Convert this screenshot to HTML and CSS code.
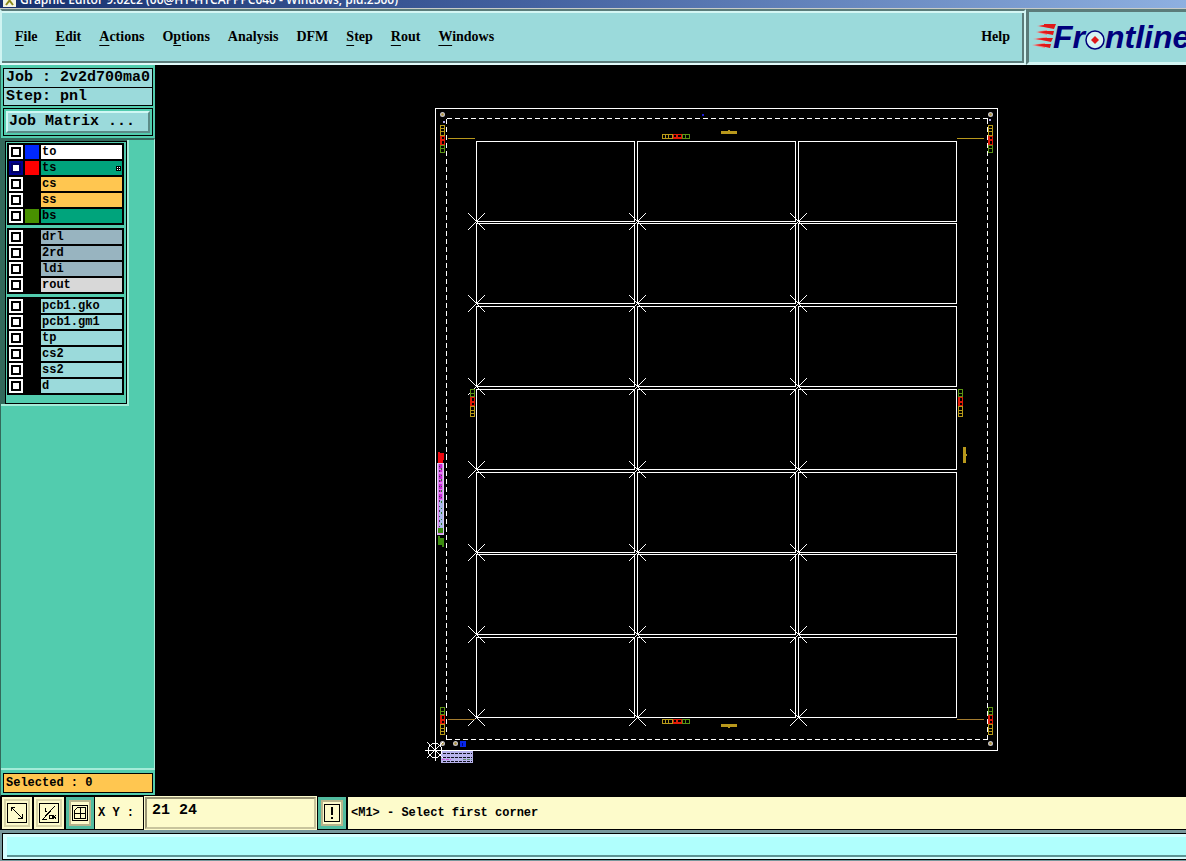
FILE: index.html
```html
<!DOCTYPE html>
<html lang="en">
<head>
<meta charset="UTF-8">
<meta name="viewport" content="width=device-width, initial-scale=1.0">
<title>Graphic Editor</title>
<link rel="stylesheet" href="styles.css">
</head>
<body>

<div class="titlebar">
  <svg class="title-icon" width="13" height="13" viewBox="0 0 13 13">
    <rect width="13" height="13" fill="#f4f4e4"/>
    <path d="M3 2L10 11M10 2L3 11" stroke="#8c8a1c" stroke-width="2"/>
  </svg>
  <span>Graphic Editor 9.02c2 (00@HY-HTCAPPPC040 - Windows, pid:2500)</span>
</div>

<div class="top">
  <nav class="menubar">
    <button class="menu"><u>F</u>ile</button>
    <button class="menu"><u>E</u>dit</button>
    <button class="menu"><u>A</u>ctions</button>
    <button class="menu">O<u>p</u>tions</button>
    <button class="menu">Analysis</button>
    <button class="menu">DFM</button>
    <button class="menu"><u>S</u>tep</button>
    <button class="menu"><u>R</u>out</button>
    <button class="menu"><u>W</u>indows</button>
    <button class="menu help">Help</button>
  </nav>
  <div class="logo">
    <svg width="158" height="50" role="img" aria-label="Frontline">
      <g fill="#f08080">
        <path d="M8 14L20 12L20 16Z"/>
        <path d="M7 20L18 18L18 23Z"/>
        <path d="M4 27L18 25L18 29Z"/>
        <path d="M3 33L16 31L16 36Z"/>
      </g>
      <g fill="#e01818">
        <path d="M10 14L15 13V12H27L25 17L15 15Z"/>
        <path d="M9 20L16 19H25L24 23L14 21Z"/>
        <path d="M7 27L14 26H24L22 30L13 28Z"/>
        <path d="M6 33L13 32H22L21 36L12 34Z"/>
      </g>
      <g class="logo-text">
        <text x="24" y="36">Fr</text>
        <text x="76" y="36">ntline</text>
      </g>
      <circle cx="66" cy="28" r="9" fill="#d5f3f3" stroke="#00007c" stroke-width="1.5"/>
      <path d="M66 24L70 28L66 32L62 28Z" fill="#e01818"/>
    </svg>
  </div>
</div>

<div class="main">
  <aside class="sidebar">
    <div class="info">
      <div>Job : 2v2d700ma0</div>
      <div>Step: pnl</div>
    </div>
    <div class="matrix">
      <button class="matrix-button">Job Matrix ...</button>
    </div>
    <div class="tree">
      <div class="layers-frame">
      <div class="layers">
        <div class="group">
          <label class="layer"><input type="checkbox"><i class="blue"></i><span class="white">to</span></label>
          <label class="layer"><input type="checkbox" checked><i class="red"></i><span class="signal">ts
            <svg width="5" height="5" shape-rendering="crispEdges"><rect width="5" height="5" fill="#000"/><path d="M1 1h1v1h-1zM3 1h1v1h-1zM1 3h1v1h-1zM3 3h1v1h-1z" fill="#fff"/></svg></span></label>
          <label class="layer"><input type="checkbox"><i></i><span class="mask">cs</span></label>
          <label class="layer"><input type="checkbox"><i></i><span class="mask">ss</span></label>
          <label class="layer"><input type="checkbox"><i class="green"></i><span class="signal">bs</span></label>
        </div>
        <div class="group">
          <label class="layer"><input type="checkbox"><i></i><span class="drill">drl</span></label>
          <label class="layer"><input type="checkbox"><i></i><span class="drill">2rd</span></label>
          <label class="layer"><input type="checkbox"><i></i><span class="drill">ldi</span></label>
          <label class="layer"><input type="checkbox"><i></i><span class="rout">rout</span></label>
        </div>
        <div class="group">
          <label class="layer"><input type="checkbox"><i></i><span>pcb1.gko</span></label>
          <label class="layer"><input type="checkbox"><i></i><span>pcb1.gm1</span></label>
          <label class="layer"><input type="checkbox"><i></i><span>tp</span></label>
          <label class="layer"><input type="checkbox"><i></i><span>cs2</span></label>
          <label class="layer"><input type="checkbox"><i></i><span>ss2</span></label>
          <label class="layer"><input type="checkbox"><i></i><span>d</span></label>
        </div>
      </div>
      </div>
    </div>
    <div class="selected">Selected : 0</div>
  </aside>

  <div class="canvas">
    <svg class="panel" shape-rendering="crispEdges">
      <defs>
        <g id="cell"><rect x="0.5" y="0.5" width="158" height="80"/></g>
        <g id="datum"><path d="M-8 -8L9 9M9 -8L-8 9"/></g>
        <g id="cells">
          <use href="#cell" x="476"/><use href="#cell" x="637"/><use href="#cell" x="798"/>
          <use href="#datum" x="476" y="80"/><use href="#datum" x="637" y="80"/><use href="#datum" x="798" y="80"/>
        </g>
        <g id="coupon">
          <rect width="5" height="11" fill="#b89a18"/>
          <rect y="11" width="5" height="9" fill="#e01c08"/>
          <rect y="20" width="5" height="8" fill="#5c9414"/>
          <path d="M1 1h3v2h-3zM1 4h3v2h-3zM1 7h3v3h-3zM2 12h2v2h-2zM2 16h2v3h-2zM1 21h3v2h-3zM1 24h3v3h-3z" fill="#000"/>
        </g>
        <g id="target" shape-rendering="auto">
          <circle r="2.5" fill="#c8c4c8"/><circle r="1.2" fill="#a88c30"/>
        </g>
      </defs>
      <g transform="translate(-155 -65)">
        <!-- panel outline and active area -->
        <g fill="none" stroke="#fff">
          <rect x="435.5" y="108.5" width="562" height="642"/>
          <path d="M446.5 118.5H987.5M446.5 739.5H987.5M446.5 118.5V739.5M987.5 118.5V739.5" stroke-dasharray="5 3"/>
          <use href="#cells" y="141"/>
          <use href="#cells" y="223"/>
          <use href="#cells" y="306"/>
          <use href="#cells" y="389"/>
          <use href="#cells" y="472"/>
          <use href="#cells" y="554"/>
          <use href="#cells" y="637"/>
        </g>

        <!-- test coupons -->
        <use href="#coupon" x="440" y="125"/>
        <use href="#coupon" x="988" y="125"/>
        <use href="#coupon" transform="translate(440 735) scale(1 -1)"/>
        <use href="#coupon" transform="translate(988 735) scale(1 -1)"/>
        <use href="#coupon" transform="translate(470 417) scale(1 -1)"/>
        <use href="#coupon" transform="translate(958 417) scale(1 -1)"/>
        <use href="#coupon" transform="translate(662 139) rotate(-90)"/>
        <use href="#coupon" transform="translate(662 724) rotate(-90)"/>

        <g fill="#b8981c">
          <path d="M721 131h7v-1h2v1h7v3h-16z"/>
          <path d="M721 724h16v3h-7v1h-2v-1h-7z"/>
          <path d="M963 447h3v7h1v2h-1v7h-3z"/>
          <path d="M448 138h27v1h-27zM957 138h27v1h-27z"/>
        </g>
        <path d="M448 719h27v1h-27zM957 719h27v1h-27z" fill="#a47c30"/>

        <!-- tooling holes -->
        <use href="#target" x="442.5" y="114.5"/>
        <use href="#target" x="990.5" y="114.5"/>
        <use href="#target" x="442.5" y="743.5"/>
        <use href="#target" x="455.5" y="743.5"/>
        <use href="#target" x="990.5" y="743.5"/>
        <path d="M443 121h2v2h-2zM989 119h2v2h-2z" fill="#b0a8e8"/>
        <path d="M702 114h2v2h-2z" fill="#1c1cd8"/>
        <path d="M460 741h6v6h-6z" fill="#0828e8"/>
        <path d="M462 743h1v3h-1z" fill="#000080"/>

        <!-- layer legend on the left rail -->
        <path d="M438 452h2v1h4v7h-1v3h-5z" fill="#f00810"/>
        <rect x="437.5" y="463.5" width="6" height="71" fill="#e080f0" stroke="#d8c8f0"/>
        <path d="M440.5 464V500" stroke="#c428d0" stroke-width="3" stroke-dasharray="5 1 2 2"/>
        <path d="M440.5 500V533" stroke="#a8b8e8" stroke-width="4"/>
        <path d="M439.5 466V533" stroke="#403050" stroke-dasharray="1 3 2 4"/>
        <path d="M441.5 468V533" stroke="#307828" stroke-dasharray="2 5 1 3"/>
        <path d="M438 528h5v5h-5zM438 536h2v2h4v9h-2v-2h-4z" fill="#3c8c10"/>

        <!-- stamp under the origin -->
        <rect x="441" y="751" width="32" height="12" fill="#b8b4ec"/>
        <path d="M443 753.5H472M443 757.5H472M443 761.5H472" stroke="#101020" stroke-dasharray="3 1"/>
        <path d="M442 759.5H451" stroke="#d060e0" stroke-dasharray="3 1"/>
        <path d="M463 759.5H472" stroke="#609070" stroke-dasharray="3 1"/>

        <!-- origin -->
        <g fill="none" stroke="#fff">
          <circle cx="435" cy="750.5" r="7"/>
          <path d="M425 750.5H445M435.5 740V761M427 742L443 758M443 742L427 758"/>
        </g>
      </g>
    </svg>
  </div>
</div>

<div class="toolbar">
  <button class="tool" aria-label="Snap to line">
    <svg width="20" height="20" shape-rendering="crispEdges"><rect x="0.5" y="0.5" width="19" height="19"/><path d="M4 4L15 15M4.500 8V4.500H8M11 15.500H15.500V11"/></svg>
  </button>
  <button class="tool" aria-label="Angle">
    <svg width="20" height="20" shape-rendering="crispEdges"><rect x="0.5" y="0.5" width="19" height="19"/><path d="M3 17L16 3M3 16.500H8M6.500 5V8.500H8M10 12.500h3v3h-3zM14 12l3 4M17 12l-3 4"/></svg>
  </button>
  <button class="tool active" aria-label="Grid">
    <svg width="16" height="16" shape-rendering="crispEdges"><rect x="0.5" y="0.5" width="15" height="15"/><path d="M5.500 2.500H13.500V13.500H2.500V5.500ZM8.500 2V14M2 8.500H14"/></svg>
  </button>
  <label class="xy-label" for="xy">X Y :</label>
  <input class="xy" id="xy" type="text" value="21 24">
  <button class="tool active" aria-label="Interrupt">
    <svg width="16" height="18" shape-rendering="crispEdges"><rect x="0.5" y="0.5" width="15" height="17"/><path d="M8 3V11M8 13V15" stroke-width="2"/></svg>
  </button>
  <div class="message">&lt;M1&gt; - Select first corner</div>
</div>

<div class="status"><div class="status-inner"></div></div>

</body>
</html>
```
FILE: styles.css
```css
* {
  box-sizing: border-box;
}

body {
  margin: 0;
  height: 100vh;
  display: flex;
  flex-direction: column;
  overflow: hidden;
  background-color: #000;
  color: #000;
  font-family: "Liberation Mono", monospace;
  font-weight: bold;
  font-size: 12px;
}

button {
  margin: 0;
  padding: 0;
  border: none;
  border-radius: 0;
  background: none;
  color: #000;
  font: inherit;
}

/* Title bar */
.titlebar {
  flex: none;
  height: 9px;
  display: flex;
  align-items: flex-end;
  gap: 4px;
  padding: 0 3px 1px;
  overflow: hidden;
  white-space: nowrap;
  background: linear-gradient(to right, #16306e, #4462a0 45%, #8eb0e0);
  border-bottom: 1px solid #c8ccc8;
  color: #fff;
  font-family: "Open Sans", sans-serif;
  font-size: 12px;
  font-weight: 600;
  line-height: 14px;
}

.title-icon {
  flex: none;
}

/* Menu */
.top {
  flex: none;
  height: 56px;
  display: flex;
}

.menubar {
  flex: 1;
  display: flex;
  align-items: center;
  gap: 18px;
  padding: 0 14px 0 13px;
  background-color: #9bdadb;
  border: 2px solid #5b7c7a;
  border-bottom-color: #e0fafa;
  border-left-color: #d0f4f2;
  border-right-color: #d0f4f2;
  box-shadow: inset 0 2px #d4f6f4, inset -2px -2px #5b7c7a;
}

.menu {
  font-family: "Liberation Serif", serif;
  font-size: 14px;
  line-height: 20px;
}

.menu u {
  text-underline-offset: 4px;
}

.help {
  margin-left: auto;
}

.logo {
  flex: 0 0 160px;
  overflow: hidden;
  background-color: #9bdadb;
  border-top: 3px solid #5b7c7a;
  border-left: 3px solid #5b7c7a;
  border-bottom: 3px solid #d4f6f4;
}

.logo svg {
  display: block;
}

.logo-text {
  fill: #00007c;
  font-family: "Liberation Sans", sans-serif;
  font-size: 32px;
  font-style: italic;
}

/* Side bar */
.main {
  flex: 1;
  min-height: 0;
  display: flex;
}

.sidebar {
  flex: 0 0 155px;
  display: flex;
  flex-direction: column;
  padding: 3px 2px 2px 3px;
  background-color: #52ccae;
  border-left: 1px solid #33695b;
  border-bottom: 2px solid #000;
}

.info,
.matrix {
  margin-left: -1px;
  border: 1px solid #000;
  font-size: 15px;
}

.info div {
  height: 18px;
  padding: 0 2px;
  background-color: #9bdadb;
  line-height: 18px;
  white-space: pre;
}

.info div + div {
  border-top: 1px solid #000;
}

.matrix {
  margin-top: 2px;
  padding: 2px;
}

.matrix-button {
  width: 100%;
  height: 22px;
  padding-left: 1px;
  background-color: #9bdadb;
  border: 2px solid;
  border-color: #d0f8f4 #5b8c88 #5b8c88 #d0f8f4;
  line-height: 18px;
  text-align: left;
}

.tree {
  flex: 1;
  margin: 2px -2px 3px -3px;
  border-top: 2px solid #33695b;
  border-right: 1px solid #a4ecd8;
  border-bottom: 2px solid #a4ecd8;
}

.layers-frame {
  width: 128px;
  padding: 1px 0 0 4px;
  background-color: #33695b;
  border-right: 2px solid #a4ecd8;
  border-bottom: 2px solid #a4ecd8;
}

.layers {
  display: flex;
  flex-direction: column;
  gap: 3px;
  padding: 1px 2px 8px 1px;
  background-color: #52ccae;
  border: 1px solid #000;
}

.group {
  display: flex;
  flex-direction: column;
  gap: 2px;
  padding: 2px;
  background-color: #000;
}

.layer {
  display: grid;
  grid-template-columns: 14px 14px 1fr;
  gap: 2px;
  height: 14px;
}

.layer input {
  appearance: none;
  width: 14px;
  height: 14px;
  margin: 0;
  background-color: #fff;
  border: 2px solid #fff;
  box-shadow: inset 0 0 0 2px #000;
}

.layer input:checked {
  border-color: #000090;
  box-shadow: inset 0 0 0 2px #000060;
}

.layer span {
  display: flex;
  align-items: center;
  justify-content: space-between;
  padding: 0 1px;
  background-color: #9bdadb;
  line-height: 14px;
}

.layer .white { background-color: #fff; }
.layer .signal { background-color: #00a47c; }
.layer .mask { background-color: #ffc650; }
.layer .drill { background-color: #98b4c0; }
.layer .rout { background-color: #d8d8d8; }

.blue { background-color: #0028ff; }
.red { background-color: #ff0000; }
.green { background-color: #489000; }

.selected {
  height: 20px;
  margin-left: -1px;
  padding: 0 2px;
  background-color: #ffc650;
  border: 1px solid #000;
  line-height: 18px;
}

/* Drawing area */
.canvas {
  flex: 1;
  min-width: 0;
}

.panel {
  display: block;
  width: 100%;
  height: 100%;
}

/* Tool bar */
.toolbar {
  flex: none;
  height: 33px;
  display: flex;
  gap: 2px;
  padding-left: 2px;
  background-color: #000;
  border-bottom: 1px solid #000;
}

.tool {
  flex: none;
  width: 30px;
  display: flex;
  align-items: center;
  justify-content: center;
  background-color: #fdfbcb;
  box-shadow: inset 0 0 0 2px #fdfbcb, inset 0 0 0 4px #d8d4a8;
}

.tool svg {
  fill: none;
  stroke: #000;
}

.active {
  width: 28px;
  box-shadow: inset 0 0 0 3px #52bca0, inset 0 0 0 5px #b8b48c;
}

.xy-label {
  flex: 0 0 48px;
  margin-left: -1px;
  background-color: #fdfbcb;
  line-height: 32px;
  padding-left: 3px;
}

.xy {
  flex: 0 0 171px;
  min-width: 0;
  margin: 0;
  padding: 0 5px 6px;
  background-color: #fdfbcb;
  border: 2px solid;
  border-color: #989474 #c8c49c #c8c49c #989474;
  outline: 1px solid #fdfbcb;
  color: #000;
  font: inherit;
  font-size: 15px;
}

.message {
  flex: 1;
  padding-left: 3px;
  background-color: #fdfbcb;
  line-height: 32px;
}

/* Status line */
.status {
  flex: none;
  height: 31px;
  padding: 3px 0 1px 2px;
  background-color: #78989c;
}

.status-inner {
  height: 27px;
  background-color: #b0fffd;
  border: 1px solid #000;
  border-right: none;
  box-shadow: inset 4px 3px #d4ffff, inset 0 -2px #d4ffff, inset 0 -4px #5c9494;
}
```
